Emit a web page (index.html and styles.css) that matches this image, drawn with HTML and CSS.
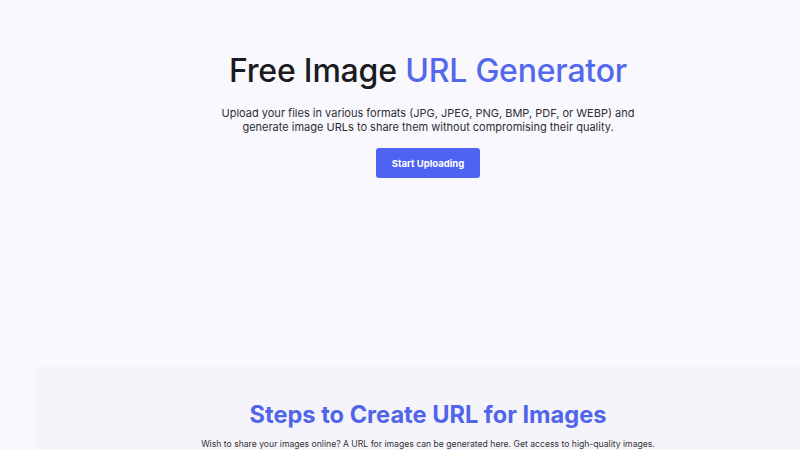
FILE: index.html
```html
<!DOCTYPE html>
<html>
<head>
<meta charset="utf-8">
<link rel="stylesheet" href="styles.css">
</head>
<body>
<section class="hero">
  <h1 class="hero-title">Free Image <span class="accent">URL Generator</span></h1>
  <p class="hero-text">Upload your files in various formats (JPG, JPEG, PNG, BMP, PDF, or WEBP) and<br>generate image URLs to share them without compromising their quality.</p>
  <button class="cta">Start Uploading</button>
</section>
<section class="steps">
  <h2 class="steps-title">Steps to Create URL for Images</h2>
  <p class="steps-text">Wish to share your images online? A URL for images can be generated here. Get access to high-quality images.</p>
</section>
</body>
</html>
```
FILE: styles.css
```css
html, body {
  margin: 0;
  padding: 0;
  background: #f9f8fc;
  font-family: Inter, "Noto Sans", sans-serif;
  overflow: hidden;
}
.hero {
  display: flex;
  flex-direction: column;
  align-items: center;
  padding: 51px 0 0 56px;
  height: 314px;
  box-sizing: border-box;
}
.hero-title {
  margin: 0;
  font-size: 32px;
  font-weight: 500;
  color: #1a1a22;
  letter-spacing: -0.2px;
  line-height: 40px;
}
.accent {
  color: #5468ec;
}
.hero-text {
  margin: 15px 0 0;
  font-size: 11px;
  line-height: 14px;
  color: #2e2e36;
  text-align: center;
}
.cta {
  margin-top: 14px;
  width: 104px;
  height: 30px;
  border: none;
  border-radius: 3px;
  background: #4f63f2;
  color: #fff;
  font-family: Inter, sans-serif;
  font-weight: 700;
  font-size: 9.5px;
}
.steps {
  margin: 52px 0 0 36px;
  background: #f4f4fa;
  border-radius: 10px 0 0 0;
  height: 84px;
  display: flex;
  flex-direction: column;
  align-items: center;
  padding: 34px 0 0 20px;
  box-sizing: border-box;
  overflow: hidden;
}
.steps-title {
  margin: 0;
  font-size: 23.6px;
  font-weight: 700;
  color: #5065ea;
  line-height: 30px;
}
.steps-text {
  margin: 9px 0 0;
  font-size: 8.65px;
  line-height: 11px;
  color: #333;
}
```
